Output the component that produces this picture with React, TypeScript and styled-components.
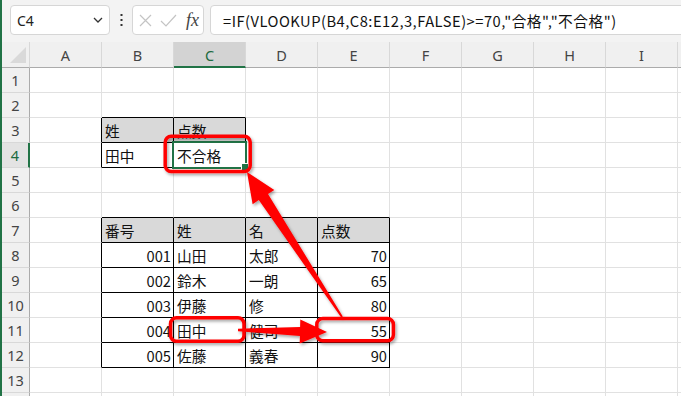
import React from 'react';
import styled, { createGlobalStyle } from 'styled-components';

const GREEN = '#217346';
const GRID = '#e1e1e1';
const HEAD_LINE = '#ababab';

const Global = createGlobalStyle`
  html, body { margin: 0; padding: 0; background: #fff; }
  body { width: 681px; height: 396px; overflow: hidden; }
`;

const Page = styled.div`
  position: relative;
  width: 681px;
  height: 396px;
  overflow: hidden;
  box-sizing: border-box;
  border-left: 2px solid ${GREEN};
  background: #fff;
  display: flex;
  flex-direction: column;
`;

const Toolbar = styled.div`
  flex: 0 0 42px;
  box-sizing: border-box;
  height: 42px;
  background: #f3f3f3;
  display: flex;
  align-items: flex-start;
  padding: 5px 0 0 8px;
  overflow: hidden;
`;

const Box = styled.div`
  box-sizing: border-box;
  height: 30px;
  background: #fff;
  border: 1px solid #d6d6d6;
  border-radius: 4px;
  display: flex;
  align-items: center;
`;

const NameBox = styled(Box)`
  flex: 0 0 100px;
  justify-content: space-between;
  padding: 0 6px 0 6px;
  font-family: 'Noto Sans', sans-serif;
  font-size: 14px;
  color: #222;
`;

const DotsSlot = styled.div`
  flex: 0 0 22px;
  height: 30px;
  display: flex;
  align-items: center;
  justify-content: center;
`;

const FuncBox = styled(Box)`
  flex: 0 0 72px;
  padding: 0 0 0 6px;
  gap: 8px;
`;

const Fx = styled.span`
  font-family: 'Liberation Serif', serif;
  font-style: italic;
  font-size: 18px;
  color: #444;
  margin-left: 1px;
  line-height: 1;
`;

const FormulaBox = styled(Box)`
  flex: 0 0 500px;
  margin-left: 6px;
  padding-left: 12px;
  font-family: 'Noto Sans CJK JP', sans-serif;
  font-size: 14.7px;
  letter-spacing: 0.5px;
  color: #111;
  white-space: nowrap;
`;

const Sheet = styled.div`
  display: grid;
  grid-template-columns: 28px repeat(9, 72px) 1fr;
  grid-template-rows: 26px repeat(14, 25px);
`;

const Corner = styled.div`
  box-sizing: border-box;
  background: #f0f0f0;
  border-right: 1px solid #d8d8d8;
  border-bottom: 1px solid ${HEAD_LINE};
  display: flex;
  align-items: flex-end;
  justify-content: flex-end;
  padding: 0 3px 4px 0;
`;

const ColHead = styled.div<{ $sel?: boolean }>`
  box-sizing: border-box;
  background: ${(p) => (p.$sel ? '#d3d3d3' : '#f0f0f0')};
  border-right: 1px solid #d8d8d8;
  border-bottom: ${(p) => (p.$sel ? `2px solid ${GREEN}` : `1px solid ${HEAD_LINE}`)};
  display: flex;
  align-items: center;
  justify-content: center;
  font-family: 'Noto Sans', sans-serif;
  font-size: 14.5px;
  color: ${(p) => (p.$sel ? '#1e6b40' : '#444')};
  padding-top: 1px;
`;

const RowHead = styled.div<{ $sel?: boolean }>`
  box-sizing: border-box;
  background: ${(p) => (p.$sel ? '#e3e3e3' : '#f0f0f0')};
  border-right: ${(p) => (p.$sel ? `2px solid ${GREEN}` : `1px solid ${HEAD_LINE}`)};
  border-bottom: 1px solid #d8d8d8;
  display: flex;
  align-items: center;
  justify-content: center;
  font-family: 'Noto Sans', sans-serif;
  font-size: 14.5px;
  color: ${(p) => (p.$sel ? '#1e6b40' : '#444')};
`;

const Cell = styled.div<{ $rb: string; $bb: string; $hdr?: boolean; $right?: boolean }>`
  position: relative;
  box-sizing: border-box;
  background: ${(p) => (p.$hdr ? '#d9d9d9' : '#fff')};
  border-right: 1px solid ${(p) => p.$rb};
  border-bottom: 1px solid ${(p) => p.$bb};
  display: flex;
  align-items: center;
  justify-content: ${(p) => (p.$right ? 'flex-end' : 'flex-start')};
  padding: 1px 2px 0 3px;
  font-family: 'Noto Sans CJK JP', sans-serif;
  font-size: 14.7px;
  color: #111;
  white-space: nowrap;
`;

const Selection = styled.div`
  position: absolute;
  top: -2px;
  left: -2px;
  right: -2px;
  bottom: -2px;
  border: 2px solid ${GREEN};
  z-index: 2;
  pointer-events: none;
`;

const Handle = styled.div`
  position: absolute;
  right: -4px;
  bottom: -4px;
  width: 6px;
  height: 6px;
  background: ${GREEN};
  border: 1px solid #fff;
`;

const Overlay = styled.svg`
  position: absolute;
  left: -2px;
  top: 0;
  width: 681px;
  height: 396px;
  pointer-events: none;
  z-index: 5;
`;

const COLS = ['A', 'B', 'C', 'D', 'E', 'F', 'G', 'H', 'I', 'J'];
const ROWS = Array.from({ length: 14 }, (_, i) => i + 1);
const LAST_VISIBLE_ROW = 13;

type CellData = { t: string; hdr?: boolean; right?: boolean };
const data: Record<string, CellData> = {
  B3: { t: '姓', hdr: true },
  C3: { t: '点数', hdr: true },
  B4: { t: '田中' },
  C4: { t: '不合格' },
  B7: { t: '番号', hdr: true },
  C7: { t: '姓', hdr: true },
  D7: { t: '名', hdr: true },
  E7: { t: '点数', hdr: true },
};
const rowsData: [string, string, string, string][] = [
  ['001', '山田', '太郎', '70'],
  ['002', '鈴木', '一朗', '65'],
  ['003', '伊藤', '修', '80'],
  ['004', '田中', '健司', '55'],
  ['005', '佐藤', '義春', '90'],
];
rowsData.forEach((r, i) => {
  const row = 8 + i;
  data[`B${row}`] = { t: r[0], right: true };
  data[`C${row}`] = { t: r[1] };
  data[`D${row}`] = { t: r[2] };
  data[`E${row}`] = { t: r[3], right: true };
});

const tables = [
  { r1: 3, r2: 4, c1: 1, c2: 2 },
  { r1: 7, r2: 12, c1: 1, c2: 4 },
];
const inTable = (r: number, c: number) =>
  tables.some((t) => r >= t.r1 && r <= t.r2 && c >= t.c1 && c <= t.c2);

type P = [number, number];
function arrowPoints(tail: P, tip: P, tw: number, nw: number, hl: number, hw: number) {
  const dx = tail[0] - tip[0];
  const dy = tail[1] - tip[1];
  const len = Math.hypot(dx, dy);
  const ux = dx / len;
  const uy = dy / len;
  const nx = -uy;
  const ny = ux;
  const neck: P = [tip[0] + ux * hl, tip[1] + uy * hl];
  const pts: P[] = [
    tip,
    [neck[0] + nx * hw, neck[1] + ny * hw],
    [neck[0] + nx * (nw / 2), neck[1] + ny * (nw / 2)],
    [tail[0] + nx * (tw / 2), tail[1] + ny * (tw / 2)],
    [tail[0] - nx * (tw / 2), tail[1] - ny * (tw / 2)],
    [neck[0] - nx * (nw / 2), neck[1] - ny * (nw / 2)],
    [neck[0] - nx * hw, neck[1] - ny * hw],
  ];
  return pts.map((p) => `${p[0].toFixed(1)},${p[1].toFixed(1)}`).join(' ');
}

const ChevronDown = () => (
  <svg width="10" height="6" viewBox="0 0 10 6">
    <path d="M1 1 L5 5 L9 1" fill="none" stroke="#333" strokeWidth="1.3" />
  </svg>
);

const VDots = () => (
  <svg width="3" height="12" viewBox="0 0 3 12">
    <rect x="0.5" y="0" width="2" height="2" fill="#333" />
    <rect x="0.5" y="5" width="2" height="2" fill="#333" />
    <rect x="0.5" y="10" width="2" height="2" fill="#333" />
  </svg>
);

const XIcon = () => (
  <svg width="13" height="13" viewBox="0 0 13 13">
    <path d="M1 1 L12 12 M12 1 L1 12" stroke="#c4c4c4" strokeWidth="1.2" fill="none" />
  </svg>
);

const CheckIcon = () => (
  <svg width="17" height="13" viewBox="0 0 17 13">
    <path d="M1 7 L6 12 L16 1" stroke="#c4c4c4" strokeWidth="1.2" fill="none" />
  </svg>
);

const CornerTri = () => (
  <svg width="16" height="16" viewBox="0 0 16 16">
    <path d="M16 0 L16 16 L0 16 Z" fill="#d9d9d9" />
  </svg>
);

export default function App() {
  return (
    <>
      <Global />
      <Page>
        <Toolbar>
          <NameBox>
            <span>C4</span>
            <ChevronDown />
          </NameBox>
          <DotsSlot>
            <VDots />
          </DotsSlot>
          <FuncBox>
            <XIcon />
            <CheckIcon />
            <Fx>fx</Fx>
          </FuncBox>
          <FormulaBox>=IF(VLOOKUP(B4,C8:E12,3,FALSE)&gt;=70,"合格","不合格")</FormulaBox>
        </Toolbar>
        <Sheet>
          <Corner>
            <CornerTri />
          </Corner>
          {COLS.map((c) => (
            <ColHead key={c} $sel={c === 'C'}>
              {c === 'J' ? '' : c}
            </ColHead>
          ))}
          {ROWS.map((r) => (
            <React.Fragment key={r}>
              <RowHead $sel={r === 4}>{r <= LAST_VISIBLE_ROW ? r : ''}</RowHead>
              {COLS.map((c, ci) => {
                const key = `${c}${r}`;
                const d = data[key];
                const rb = inTable(r, ci) || inTable(r, ci + 1) ? '#000' : GRID;
                const bb = inTable(r, ci) || inTable(r + 1, ci) ? '#000' : GRID;
                return (
                  <Cell key={key} $rb={rb} $bb={bb} $hdr={d?.hdr} $right={d?.right}>
                    {d?.t}
                    {key === 'C4' && (
                      <Selection>
                        <Handle />
                      </Selection>
                    )}
                  </Cell>
                );
              })}
            </React.Fragment>
          ))}
        </Sheet>
        <Overlay viewBox="0 0 681 396">
          <defs>
            <filter id="shadow" x="-30%" y="-30%" width="160%" height="160%">
              <feDropShadow dx="1.5" dy="2" stdDeviation="1.6" floodColor="#000" floodOpacity="0.35" />
            </filter>
          </defs>
          <g filter="url(#shadow)">
            <rect x="165.2" y="136.2" width="85" height="35.3" rx="6" fill="none" stroke="#ff0000" strokeWidth="3.5" />
            <rect x="170.5" y="317.7" width="73.5" height="23.6" rx="6" fill="none" stroke="#ff0000" strokeWidth="3.5" />
            <rect x="316.8" y="318.4" width="76.6" height="22.4" rx="6" fill="none" stroke="#ff0000" strokeWidth="3.5" />
            <polygon points={arrowPoints([342, 317], [247, 172], 2, 11, 30, 13)} fill="#ff0000" />
            <polygon points={arrowPoints([238, 330], [327, 332], 2.5, 9, 27, 12)} fill="#ff0000" />
          </g>
        </Overlay>
      </Page>
    </>
  );
}
